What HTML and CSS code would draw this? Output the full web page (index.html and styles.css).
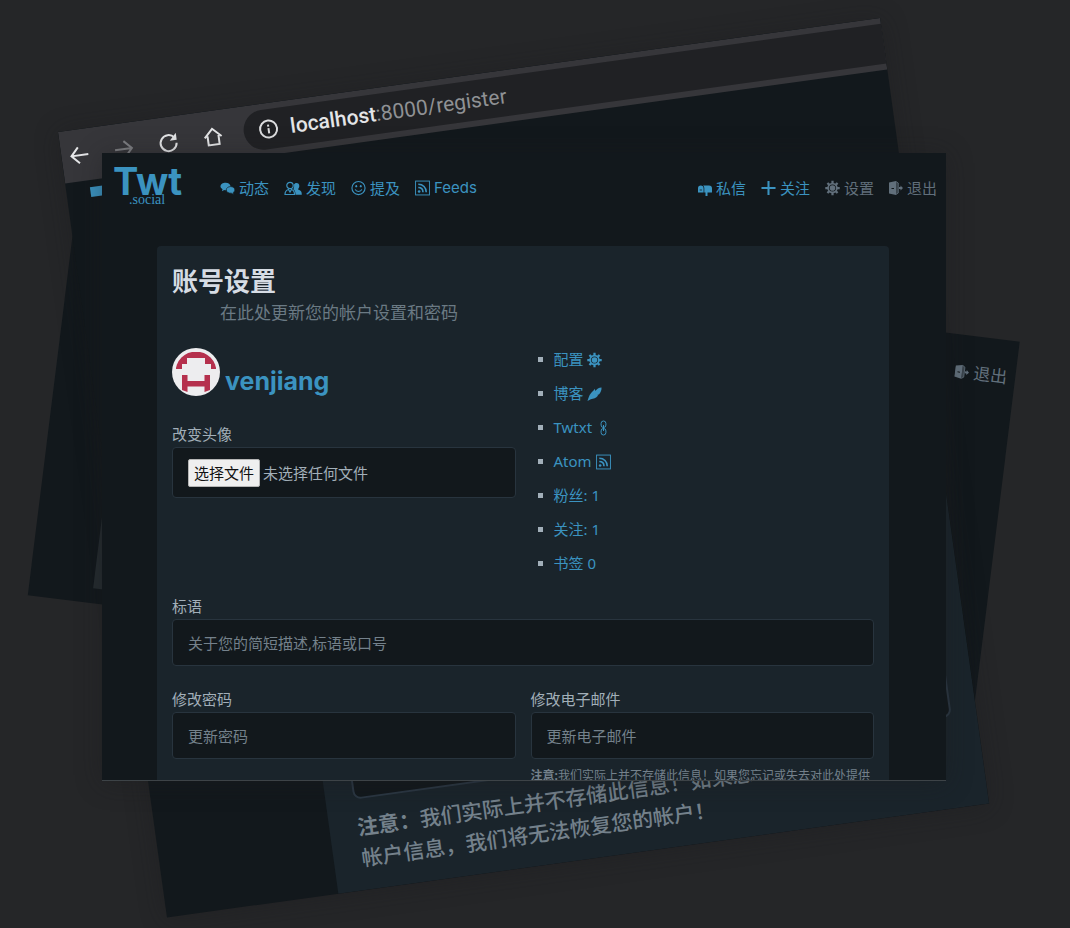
FILE: index.html
```html
<!DOCTYPE html>
<html lang="zh-CN">
<head>
<meta charset="utf-8">
<meta name="viewport" content="width=device-width, initial-scale=1">
<title>Twt.social 账号设置</title>
<link rel="stylesheet" href="styles.css">
</head>
<body>
<svg class="defs" aria-hidden="true">
  <symbol id="i-chat" viewBox="0 0 16 16"><path fill="currentColor" d="M6 2.500c3 0 5.200 1.700 5.200 4 0 2.200-2.200 3.900-5.200 3.900-.5 0-1 0-1.500-.2L2 11.500l.7-2.200C1.500 8.600.5 7.600.5 6.500c0-2.300 2.500-4 5.500-4Z"/><path fill="currentColor" stroke="#12181c" stroke-width=".7" d="M11.300 6.500c2.500 0 4.500 1.500 4.500 3.500 0 1.200-.7 2.200-1.700 2.800l.3 2-2.300-1.300c-3 .3-5.400-1.300-5.400-3.500 0-2 2-3.500 4.600-3.500Z"/></symbol>
  <symbol id="i-users" viewBox="0 0 18 16"><g fill="none" stroke="currentColor" stroke-width="1.200"><circle cx="6" cy="5.500" r="3.200"/><path d="M1 14.500c0-3.500 1.500-4.500 3.500-5L6 12l1.500-2.500c2 .5 3 1.500 3 5Z"/></g><path fill="currentColor" d="M12.500 3c1.800 0 2.800 1.300 2.800 3 0 1.200-.4 2.200-1.100 2.800l.1 1c2.400.5 3.500 1.500 3.500 5H11.500c0-3-.7-4.500-2.300-5.500.8-1 1.100-2.300.8-4.700.5-1 1.300-1.600 2.500-1.600Z"/></symbol>
  <symbol id="i-smile" viewBox="0 0 16 16"><g fill="none" stroke="currentColor" stroke-width="1.200"><circle cx="8" cy="8" r="7"/><path d="M4.500 9.500c1 3 6 3 7 0"/></g><ellipse cx="5.600" cy="6" rx="1" ry="1.300" fill="currentColor"/><ellipse cx="10.400" cy="6" rx="1" ry="1.300" fill="currentColor"/></symbol>
  <symbol id="i-rss" viewBox="0 0 16 16"><g fill="none" stroke="currentColor"><rect x=".6" y=".6" width="14.800" height="14.800"/><path stroke-width="1.700" d="M3.500 7.500c3 0 5 2 5 5M3.500 4c5 0 8.500 3.500 8.500 8.500"/></g><circle cx="4.400" cy="11.700" r="1.400" fill="currentColor"/></symbol>
  <symbol id="i-mailbox" viewBox="0 0 14 16"><path fill="currentColor" d="M0 12.500V8.500C0 6.300 1 5.500 2.800 5.500s2.800 1 2.800 3v4ZM5 5.500h6c2 0 3 1.200 3 3v4h-4.500V16h-2v-3.500H6.300v-4c0-1.400-.4-2.300-1.300-3Z"/><path stroke="#12181c" stroke-width=".8" d="M1.700 10h2.200"/></symbol>
  <symbol id="i-plus" viewBox="0 0 16 16"><path fill="none" stroke="currentColor" stroke-width="2.200" d="M8 .5v15M.5 8h15"/></symbol>
  <symbol id="i-gear" viewBox="0 0 16 16"><g fill="none" stroke="currentColor"><circle cx="8" cy="8" r="4.700" stroke-width="1.800"/><path stroke-width="2.400" d="M8 .3v3.400M8 12.300v3.400M.3 8h3.400M12.300 8h3.400M2.600 2.600l2.300 2.300M11.100 11.100l2.300 2.300M13.400 2.600l-2.300 2.300M4.900 11.100l-2.300 2.300"/></g><circle cx="8" cy="8" r="3" fill="currentColor"/></symbol>
  <symbol id="i-exit" viewBox="0 0 14 16"><path fill="currentColor" d="M0 2.500 7 1v14l-7-1.500Z"/><path fill="currentColor" fill-opacity=".5" stroke="currentColor" stroke-width=".8" d="M7 1.500 9.300 3v10L7 14.500"/><path stroke="#12181c" d="M2.500 8.500H5"/><path fill="currentColor" d="M10 7h1.500V5.500L14 8l-2.500 2.500V9H10Z"/></symbol>
  <symbol id="i-feather" viewBox="0 0 16 16"><path fill="currentColor" d="M.5 15.500c1-3 1.700-6 3.500-8C6 5 7 4.500 8.500 2.500l.3 2.300C10.500 2.500 12.500 1.300 15.500 1c.2 3-1 5.500-2.800 7.500l-1.400.2.300 1.200c-2 2.300-4.500 3.300-7.600 3.600Z"/></symbol>
  <symbol id="i-chain" viewBox="0 0 8 16"><g fill="none" stroke="currentColor"><rect x="1.600" y="1" width="4.800" height="6.500" rx="2.400"/><rect x="1.600" y="8.500" width="4.800" height="6.500" rx="2.400"/><path d="M4 5v6"/></g></symbol>
</svg>

<main class="desk">
  <section class="sheet sheet-back" aria-hidden="true">
    <span class="back-link"><svg class="ico"><use href="#i-exit"/></svg>退出</span>
    <div class="back-panel"></div>
  </section>

  <section class="sheet sheet-register">
    <div class="toolbar">
      <button class="tool" aria-label="后退"><svg viewBox="0 0 20 20"><path d="M19 10H2M9.500 2 2 10l7.500 8"/></svg></button>
      <button class="tool dim" aria-label="前进"><svg viewBox="0 0 20 20"><path d="M1 10h17M10.500 2l7.500 8-7.500 8"/></svg></button>
      <button class="tool" aria-label="刷新"><svg viewBox="0 0 20 20"><path d="M16.500 5.500A8 8 0 1 0 18 11"/><path class="solid" d="M18.500 1v7h-7Z"/></svg></button>
      <button class="tool" aria-label="主页"><svg viewBox="0 0 20 20"><path d="M4.500 9v9h11V9M1.500 10.500 10 2l8.500 8.500"/></svg></button>
      <div class="address">
        <svg viewBox="0 0 20 20"><circle cx="10" cy="10" r="8.500"/><path d="M10 9v5.500M10 5.500v2"/></svg>
        <span><b>localhost</b>:8000/register</span>
      </div>
    </div>
    <div class="brand-mark"></div>
    <div class="register-panel">
      <div class="register-field"></div>
      <p class="register-note"><b>注意：</b>我们实际上并不存储此信息！如果您忘记或失去对此处<br>帐户信息，我们将无法恢复您的帐户！</p>
    </div>
  </section>

  <section class="sheet sheet-main">
    <header class="topbar">
      <a class="logo" href="#"><span class="logo-name">Twt</span><span class="logo-sub">.social</span></a>
      <nav class="links">
        <a href="#"><svg class="ico"><use href="#i-chat"/></svg>动态</a>
        <a href="#"><svg class="ico ico-w"><use href="#i-users"/></svg>发现</a>
        <a href="#"><svg class="ico"><use href="#i-smile"/></svg>提及</a>
        <a href="#" class="feeds"><svg class="ico"><use href="#i-rss"/></svg>Feeds</a>
      </nav>
      <nav class="links links-end">
        <a href="#"><svg class="ico ico-s"><use href="#i-mailbox"/></svg>私信</a>
        <a href="#"><svg class="ico"><use href="#i-plus"/></svg>关注</a>
        <a href="#" class="muted"><svg class="ico"><use href="#i-gear"/></svg>设置</a>
        <a href="#" class="muted"><svg class="ico ico-s"><use href="#i-exit"/></svg>退出</a>
      </nav>
    </header>
    <article class="card">
      <h1>账号设置</h1>
      <p class="subtitle">在此处更新您的帐户设置和密码</p>
      <form>
        <div class="cols">
          <div>
            <a class="profile" href="#">
              <svg class="avatar" viewBox="0 0 48 48"><defs><clipPath id="disc"><circle cx="24" cy="24" r="20.500"/></clipPath></defs><circle cx="24" cy="24" r="24" fill="#ededef"/><path clip-path="url(#disc)" fill="#b5304d" d="M4 4h40v17h-5v-5h-6v-6H15v6h-5v5H4Z"/><path fill="#b5304d" d="M10 27h5.500v6h17v-6H38v15l-5.500 2v-5.500h-17V44L10 42Z"/></svg>
              <strong>venjiang</strong>
            </a>
            <label for="avatar">改变头像</label>
            <label class="file" for="avatar"><span class="file-button">选择文件</span>未选择任何文件<input id="avatar" type="file"></label>
          </div>
          <ul class="menu">
            <li><a href="#">配置 <svg class="ico"><use href="#i-gear"/></svg></a></li>
            <li><a href="#">博客 <svg class="ico"><use href="#i-feather"/></svg></a></li>
            <li><a href="#">Twtxt <svg class="ico"><use href="#i-chain"/></svg></a></li>
            <li><a href="#">Atom <svg class="ico"><use href="#i-rss"/></svg></a></li>
            <li><a href="#">粉丝: 1</a></li>
            <li><a href="#">关注: 1</a></li>
            <li><a href="#">书签 0</a></li>
          </ul>
        </div>
        <div class="field">
          <label for="tagline">标语</label>
          <input id="tagline" type="text" placeholder="关于您的简短描述,标语或口号">
        </div>
        <div class="cols">
          <div class="field">
            <label for="password">修改密码</label>
            <input id="password" type="password" placeholder="更新密码">
          </div>
          <div class="field">
            <label for="email">修改电子邮件</label>
            <input id="email" type="email" placeholder="更新电子邮件">
            <p class="note"><b>注意:</b>我们实际上并不存储此信息！如果您忘记或失去对此处提供</p>
          </div>
        </div>
      </form>
    </article>
  </section>
</main>
</body>
</html>
```
FILE: styles.css
```css
* { box-sizing: border-box; }

body {
  margin: 0;
  background: #252628;
  color: #a2afb9;
  font: 15px/24px "Noto Sans", "Noto Sans CJK SC", sans-serif;
}

.defs { position: absolute; width: 0; height: 0; }

h1, p, ul { margin: 0; padding: 0; }
a { color: #3b93c0; text-decoration: none; }

.desk {
  position: relative;
  min-height: 100vh;
  overflow: hidden;
}

/* Overlapping sheets on the desk */
.sheet {
  position: absolute;
  display: flex;
  flex-direction: column;
  overflow: hidden;
  background: #12181c;
  transform-origin: 0 0;
}

.sheet-back {
  left: 74px;
  top: 224px;
  width: 953px;
  height: 374px;
  padding: 25px 8px 15px 64px;
  transform: rotate(7.1deg);
}
.back-link {
  display: flex;
  align-items: center;
  justify-content: flex-end;
  gap: 4px;
  color: #616f7b;
  font-size: 17px;
}
.back-panel {
  flex: 1;
  margin: 10px 60px 0 0;
  background: #252c30;
}

.sheet-register {
  left: 58px;
  top: 132px;
  width: 830px;
  height: 793px;
  transform: rotate(-7.9deg);
  box-shadow: 0 2px 24px #1b1c1e66;
}
.toolbar {
  display: flex;
  flex: none;
  align-items: center;
  gap: 25px;
  height: 52px;
  padding-left: 8px;
  background: #36363a;
}
.tool {
  width: 20px;
  height: 20px;
  padding: 0;
  border: 0;
  background: none;
  color: #e4e5e7;
}
.tool.dim { color: #7d7e82; }
.toolbar svg {
  display: block;
  flex: none;
  width: 20px;
  height: 20px;
  fill: none;
  stroke: currentColor;
  stroke-width: 2;
}
.toolbar .solid { fill: currentColor; stroke: none; }
.address {
  display: flex;
  flex: 1;
  align-items: center;
  gap: 12px;
  height: 40px;
  margin-left: -4px;
  padding-left: 15px;
  border-radius: 20px 0 0 20px;
  background: #202124;
  color: #8f9194;
  font: 21px/24px Roboto, sans-serif;
}
.address svg { color: #dcdddf; }
.address b { color: #e4e5e7; font-weight: 500; }
.brand-mark {
  flex: none;
  width: 40px;
  height: 10px;
  margin: 7px 0 0 24px;
  background: #3b93c0;
}
.register-panel {
  display: flex;
  flex: 1;
  flex-direction: column;
  justify-content: flex-end;
  margin: 91px 0 0 173px;
  padding: 0 25px 16px 28px;
  background: #1a242b;
}
.register-field {
  height: 80px;
  border: 2px solid #2b3743;
  border-radius: 8px;
  background: #12181c;
}
.register-note {
  margin-top: 13px;
  color: #74818b;
  font-size: 21px;
  font-weight: 500;
  line-height: 31px;
  white-space: nowrap;
}

.sheet-main {
  left: 102px;
  top: 153px;
  width: 844px;
  height: 628px;
  border-bottom: 1px solid #3d4347;
  box-shadow: 0 2px 24px #1b1c1e66;
}

/* Top navigation */
.topbar {
  display: flex;
  flex: none;
  align-items: center;
  height: 70px;
  padding: 0 9px 0 11px;
}
.logo {
  display: flex;
  flex-direction: column;
  width: 107px;
  padding-bottom: 4px;
}
.logo-name {
  font: 700 38px/28px Inter, sans-serif;
}
.logo-sub {
  padding-left: 16px;
  font: 14px/10px "Liberation Serif", serif;
}
.links {
  display: flex;
  gap: 15px;
}
.links a {
  display: flex;
  align-items: center;
  gap: 4px;
}
.links-end { margin-left: auto; }
.links .muted { color: #616f7b; }
.links .feeds { font-family: Inter, sans-serif; }
.ico { flex: none; width: 15px; height: 16px; vertical-align: -3px; }
.ico-w { width: 18px; }
.ico-s { width: 14px; }

/* Settings card */
.card {
  flex: 1 0 auto;
  margin: 23px 57px 0 55px;
  padding: 15px;
  border-radius: 4px;
  background: #1a242b;
}
h1 {
  color: #d6dce4;
  font-size: 26px;
  line-height: 40px;
}
.subtitle {
  margin: 0 0 23px 48px;
  color: #6b7a84;
  font-size: 17px;
}
.cols {
  display: grid;
  grid-template-columns: 1fr 1fr;
  gap: 15px;
}
label { display: block; }
.profile {
  display: flex;
  align-items: flex-end;
  gap: 5px;
  margin-bottom: 26px;
}
.avatar { width: 48px; height: 48px; }
.profile strong { font: 700 25px/30px Inter, sans-serif; }
.file {
  display: flex;
  align-items: center;
  gap: 3px;
  height: 51px;
  margin-top: 1px;
  padding: 0 15px;
  border: 1px solid #28343e;
  border-radius: 4px;
  background: #12181c;
}
.file input { position: absolute; width: 1px; height: 1px; opacity: 0; }
.file-button {
  padding: 1px 5px;
  border: 1px solid #b5b5b5;
  border-radius: 2px;
  background: #efefef;
  color: #111;
}
.menu {
  display: grid;
  gap: 10px;
  margin-top: -1px;
  list-style: none;
}
.menu li {
  display: flex;
  align-items: center;
  gap: 11px;
  padding-left: 7px;
}
.menu li::before {
  width: 5px;
  height: 5px;
  background: #a2afb9;
  content: "";
}
.field { margin-top: 19px; }
.field + .cols .field { margin-top: 21px; }
.field input {
  display: block;
  width: 100%;
  height: 47px;
  margin-top: 1px;
  padding: 0 15px;
  border: 1px solid #28343e;
  border-radius: 4px;
  background: #12181c;
  color: #a2afb9;
  font: inherit;
}
.field input::placeholder { color: #74818b; opacity: 1; }
.note {
  margin-top: 8px;
  color: #74818b;
  font-size: 12px;
  line-height: 18px;
  white-space: nowrap;
}
```
